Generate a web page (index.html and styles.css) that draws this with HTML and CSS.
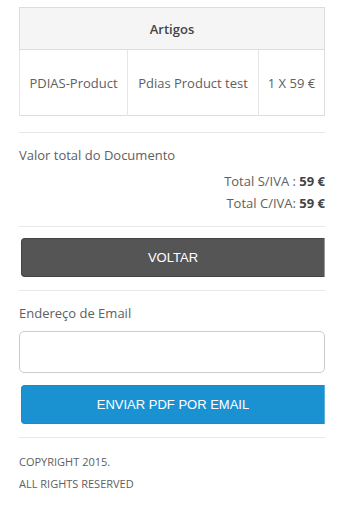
FILE: index.html
```html
<!DOCTYPE html>
<html lang="pt">
<head>
    <meta charset="UTF-8">
    <meta name="viewport" content="width=device-width, initial-scale=1.0">
    <title>Documento</title>
    <link rel="stylesheet" href="styles.css">
</head>
<body>
    <div class="page">
        <table class="artigos">
            <thead>
                <tr><th colspan="3">Artigos</th></tr>
            </thead>
            <tbody>
                <tr>
                    <td>PDIAS-Product</td>
                    <td>Pdias Product test</td>
                    <td>1 X 59 €</td>
                </tr>
            </tbody>
        </table>
        <hr>
        <p class="label">Valor total do Documento</p>
        <div class="totals">
            <p>Total S/IVA : <b>59 €</b></p>
            <p>Total C/IVA: <b>59 €</b></p>
        </div>
        <hr>
        <button class="btn btn-dark">VOLTAR</button>
        <hr>
        <p class="label">Endereço de Email</p>
        <input type="email" class="email">
        <button class="btn btn-blue">ENVIAR PDF POR EMAIL</button>
        <hr>
        <footer>
            <p>COPYRIGHT 2015.</p>
            <p>ALL RIGHTS RESERVED</p>
        </footer>
    </div>
</body>
</html>
```

FILE: styles.css
```css
body {
    margin: 0;
    background-color: white;
    color: #606060;
    font-family: "Open Sans", sans-serif;
    font-size: 13px;
}
.page {
    padding: 7px 19px 0 19px;
}
.artigos {
    width: 100%;
    border-collapse: collapse;
    border: 1px solid #ddd;
}
.artigos th {
    background-color: #f5f5f5;
    color: #444;
    font-weight: 600;
    height: 41px;
    padding: 0;
    border-bottom: 1px solid #ddd;
}
.artigos td {
    height: 65px;
    text-align: center;
    border-left: 1px solid #e6e6e6;
    padding: 0;
}
.artigos td:first-child {
    width: 107px;
}
.artigos td:last-child {
    width: 65px;
}
hr {
    border: none;
    border-top: 1px solid #e8e8e8;
    margin: 0;
}
.artigos + hr {
    margin-top: 16px;
}
.label {
    margin: 12px 0 0 0;
    line-height: 20px;
}
.totals {
    text-align: right;
    margin: 5px 0 12px 0;
}
.totals p {
    margin: 0;
    line-height: 22px;
}
.totals b {
    color: #444;
    font-weight: 700;
}
.btn {
    display: block;
    width: calc(100% - 2px);
    margin: 11px 0 13px 2px;
    height: 39px;
    border: 1px solid;
    border-radius: 4px 0 0 4px;
    font-family: "Liberation Sans", Arial, sans-serif;
    font-size: 13px;
    color: white;
}
.btn-dark {
    background-color: #555;
    border-color: #444 #999 #444 #444;
}
.btn-blue {
    background-color: #1a92d2;
    border-color: #1a8bc8 #5bb0e0 #1a8bc8 #1a8bc8;
    margin-top: 12px;
    margin-bottom: 13px;
}
.email {
    display: block;
    box-sizing: border-box;
    width: 100%;
    height: 42px;
    margin-top: 8px;
    border: 1px solid #ccc;
    border-radius: 5px;
}
footer {
    padding-top: 13px;
    font-size: 11px;
}
footer p {
    margin: 0;
    line-height: 22px;
}
```
